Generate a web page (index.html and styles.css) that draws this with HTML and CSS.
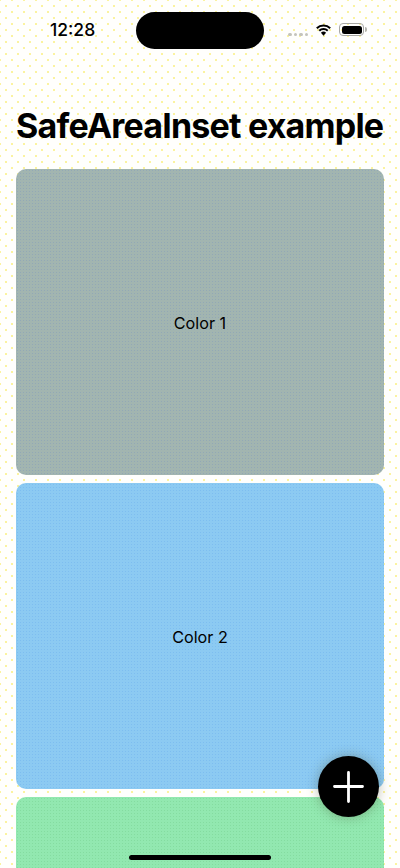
FILE: index.html
```html
<!DOCTYPE html>
<html lang="en">
<head>
<meta charset="utf-8">
<title>SafeAreaInset example</title>
<meta name="viewport" content="width=device-width, initial-scale=1">
<link rel="stylesheet" href="styles.css">
</head>
<body>
<div class="screen">
	<header class="status">
		<span class="time">12:28</span>
		<div class="island"></div>
		<div class="status_icons">
			<div class="signal"><i></i><i></i><i></i><i></i></div>
			<svg class="wifi" width="17" height="12" viewBox="0 0 17 12">
				<path d="M1.800 4.300A9.500 9.500 0 0 1 15.200 4.300M4.260 6.760A6 6 0 0 1 12.740 6.760" fill="none" stroke="#000" stroke-width="2"/>
				<path d="M8.500 11.700L5.900 8.800A3.600 3.600 0 0 1 11.100 8.800z"/>
			</svg>
			<div class="battery"><div class="battery_level"></div></div>
		</div>
	</header>

	<h1 class="title">SafeAreaInset example</h1>

	<div class="cards">
		<div class="card card_grey">Color 1</div>
		<div class="card card_blue">Color 2</div>
		<div class="card card_green"></div>
	</div>

	<button class="fab" aria-label="Add">
		<svg width="32" height="32" viewBox="0 0 32 32">
			<path d="M15.500 1.500v29M1.500 15.500h28" stroke="#fff" stroke-width="2.800" stroke-linecap="round" fill="none"/>
		</svg>
	</button>
	<div class="home_bar"></div>
</div>
</body>
</html>
```

FILE: styles.css
```css
html, body { margin: 0; padding: 0; }

body {
    font-family: Inter, "Liberation Sans", sans-serif;
    color: #000;
}

.screen {
    position: relative;
    width: 400px;
    height: 868px;
    overflow: hidden;
    background-color: #fffffd;
    background-image:
        radial-gradient(circle, #fbf3a0 0.8px, transparent 1.1px),
        radial-gradient(circle, #fbf3a0 0.8px, transparent 1.1px);
    background-size: 12px 12px;
    background-position: 0 0, 6px 6px;
}

/* status bar */
.status {
    height: 60px;
    box-sizing: border-box;
    padding-top: 12px;
    display: grid;
    grid-template-columns: 136px 128px 136px;
}

.time {
    font-size: 17.500px;
    font-weight: 500;
    line-height: 36px;
    padding-left: 50px;
}

.island {
    width: 128px;
    height: 37px;
    background: #000;
    border-radius: 19px;
}

.status_icons {
    display: flex;
    align-items: center;
    height: 37px;
    padding-left: 24px;
}

.signal { display: flex; gap: 2px; margin-top: 7.500px; }
.signal i { width: 3.500px; height: 3.500px; border-radius: 2px; background: #c4c4bc; display: block; }

.wifi { margin-left: 7px; margin-top: -2px; }

.battery {
    position: relative;
    margin-left: 7px;
    margin-top: -2px;
    width: 25px;
    height: 13px;
    box-sizing: border-box;
    border: 1px solid #a8a8a4;
    border-radius: 4px;
    padding: 1.500px;
}
.battery::after {
    content: "";
    position: absolute;
    right: -3.500px;
    top: 3px;
    width: 2px;
    height: 5px;
    border-radius: 0 2px 2px 0;
    background: #b4b4ae;
}
.battery_level { height: 100%; background: #000; border-radius: 2.500px; }

/* title + list */
.title {
    margin: 45px 0 0 16px;
    font-size: 34px;
    line-height: 41px;
    font-weight: 700;
    letter-spacing: -0.800px;
    white-space: nowrap;
}

.cards {
    margin: 23px 16px 0;
    display: flex;
    flex-direction: column;
    gap: 8px;
}

.card {
    height: 306px;
    box-sizing: border-box;
    padding-top: 2px;
    flex: none;
    border-radius: 10px;
    display: flex;
    align-items: center;
    justify-content: center;
    font-size: 16.200px;
    background-size: 3px 3px;
}

.card_grey {
    background-color: #a2b5b0;
    background-image: radial-gradient(circle, #92a8b6 0.7px, transparent 1px);
}
.card_blue {
    background-color: #8ccaf2;
    background-image: radial-gradient(circle, #7dbdf0 0.7px, transparent 1px);
}
.card_green {
    background-color: #92e8b0;
    background-image: radial-gradient(circle, #84dca0 0.7px, transparent 1px);
}

/* floating add button, over the list */
.fab {
    position: absolute;
    left: 318px;
    top: 756px;
    width: 61px;
    height: 61px;
    padding: 0;
    border: none;
    border-radius: 50%;
    background: #000;
    box-shadow: 0 0 12px rgba(60, 60, 30, 0.35);
    display: flex;
    align-items: center;
    justify-content: center;
}

.home_bar {
    position: absolute;
    left: 129px;
    bottom: 8px;
    width: 142px;
    height: 5px;
    border-radius: 3px;
    background: #000;
}
```
